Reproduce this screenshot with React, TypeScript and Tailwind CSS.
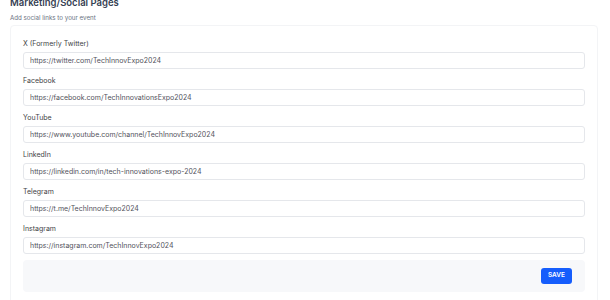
import React from 'react';

const links = [
  { label: 'X (Formerly Twitter)', value: 'https://twitter.com/TechInnovExpo2024' },
  { label: 'Facebook', value: 'https://facebook.com/TechInnovationsExpo2024' },
  { label: 'YouTube', value: 'https://www.youtube.com/channel/TechInnovExpo2024' },
  { label: 'LinkedIn', value: 'https://linkedin.com/in/tech-innovations-expo-2024' },
  { label: 'Telegram', value: 'https://t.me/TechInnovExpo2024' },
  { label: 'Instagram', value: 'https://instagram.com/TechInnovExpo2024' },
];

export default function App() {
  return (
    <div className="h-[300px] w-[610px] overflow-hidden bg-white px-[10px] font-['Inter','Liberation_Sans',sans-serif]">
      <h2 className="-mt-[3px] text-[9.5px] font-semibold leading-3 text-gray-700">Marketing/Social Pages</h2>
      <p className="mt-[5px] text-[6.2px] leading-[8px] text-gray-500">Add social links to your event</p>

      <div className="mt-[3px] w-[588px] rounded border border-gray-100 bg-white px-[12px] pt-[13px] pb-4">
        <div className="flex flex-col gap-[7px]">
          {links.map((link) => (
            <div key={link.label} className="flex flex-col gap-[3px]">
              <label className="text-[7px] leading-[10px] text-[#3f3f46]">{link.label}</label>
              <input
                readOnly
                value={link.value}
                className="h-[17px] w-full rounded-[3px] border border-gray-200 bg-white px-[6px] text-[7px] text-[#52525b] outline-none"
              />
            </div>
          ))}
        </div>

        <div className="mt-[6px] flex h-[32px] items-center justify-end rounded-sm bg-[#f7f8fa] pr-[13px]">
          <button
            type="button"
            className="h-[16px] w-[31px] rounded-[3px] bg-blue-600 text-[6.5px] font-semibold text-white"
          >
            SAVE
          </button>
        </div>
      </div>
    </div>
  );
}
